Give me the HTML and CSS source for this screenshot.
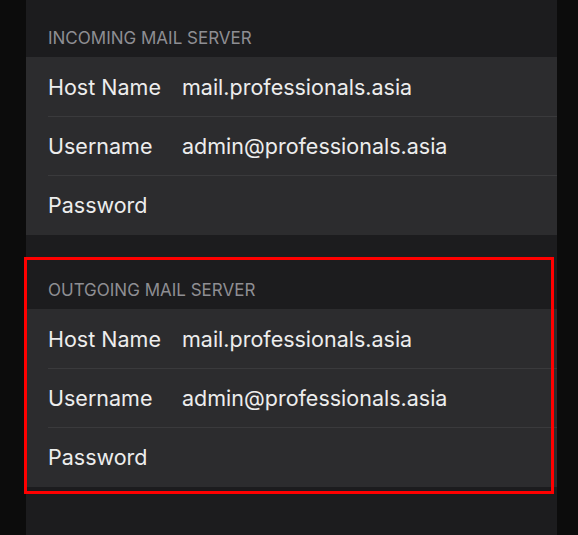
FILE: index.html
```html
<!DOCTYPE html>
<html lang="en">
<head>
    <meta charset="UTF-8">
    <title>Mail Server</title>
    <link rel="stylesheet" href="styles.css">
</head>
<body>
    <div class="screen">
        <section class="group">
            <div class="group-header">INCOMING MAIL SERVER</div>
            <div class="card">
                <div class="row"><span class="label">Host Name</span><span class="value">mail.professionals.asia</span></div>
                <div class="row"><span class="label">Username</span><span class="value">admin@professionals.asia</span></div>
                <div class="row"><span class="label">Password</span><span class="value"></span></div>
            </div>
        </section>

        <section class="group highlighted">
            <div class="group-header">OUTGOING MAIL SERVER</div>
            <div class="card">
                <div class="row"><span class="label">Host Name</span><span class="value">mail.professionals.asia</span></div>
                <div class="row"><span class="label">Username</span><span class="value">admin@professionals.asia</span></div>
                <div class="row"><span class="label">Password</span><span class="value"></span></div>
            </div>
        </section>
    </div>
</body>
</html>
```

FILE: styles.css
```css
body {
    background-color: #0c0c0c;
    font-family: 'Inter', 'Liberation Sans', sans-serif;
    margin: 0;
    padding: 0;
    overflow: hidden;
}

.screen {
    margin-left: 26px;
    width: 531px;
    height: 535px;
    background-color: #1c1c1e;
}

.group {
    position: relative;
}

.group + .group {
    margin-top: 17px;
}

.group-header {
    height: 57px;
    box-sizing: border-box;
    display: flex;
    align-items: flex-end;
    padding: 0 22px 9px;
    font-size: 17px;
    line-height: 20px;
    color: #8e8e93;
}

.card {
    background-color: #2c2c2e;
    padding-bottom: 1px;
}

.row {
    position: relative;
    height: 59px;
    display: grid;
    grid-template-columns: 134px 1fr;
    align-items: center;
    padding-left: 22px;
    font-size: 21.5px;
    color: #ededed;
}

/* separador entre linhas */
.row + .row::before {
    content: '';
    position: absolute;
    top: 0;
    left: 22px;
    right: 0;
    height: 1px;
    background-color: #3a3a3c;
}

/* moldura vermelha de destaque */
.highlighted::after {
    content: '';
    position: absolute;
    top: 5px;
    left: -2px;
    width: 530px;
    height: 237px;
    box-sizing: border-box;
    border: 3px solid #ff0000;
    pointer-events: none;
}
```
